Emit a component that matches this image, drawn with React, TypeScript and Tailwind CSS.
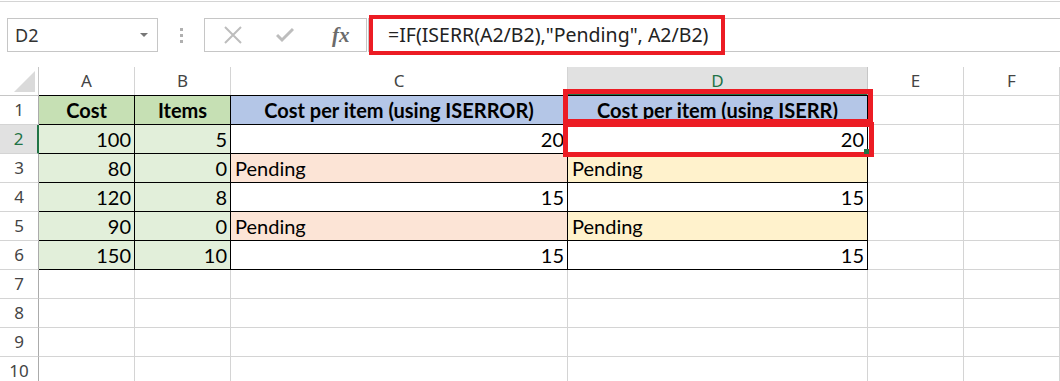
const cols = [
  { key: "A", w: "w-[96px]" },
  { key: "B", w: "w-[96px]" },
  { key: "C", w: "w-[337px]" },
  { key: "D", w: "w-[300px]" },
  { key: "E", w: "w-[96px]" },
  { key: "F", w: "w-[96px]" },
];

type Cell = { text?: string; align?: "left" | "right" | "center"; bg?: string; bold?: boolean };

const data: Cell[][] = [
  [
    { text: "Cost", align: "center", bg: "bg-[#c6e0b4]", bold: true },
    { text: "Items", align: "center", bg: "bg-[#c6e0b4]", bold: true },
    { text: "Cost per item (using ISERROR)", align: "center", bg: "bg-[#b4c6e7]", bold: true },
    { text: "Cost per item (using ISERR)", align: "center", bg: "bg-[#b4c6e7]", bold: true },
  ],
  [
    { text: "100", align: "right", bg: "bg-[#e2efda]" },
    { text: "5", align: "right", bg: "bg-[#e2efda]" },
    { text: "20", align: "right", bg: "bg-white" },
    { text: "20", align: "right", bg: "bg-white" },
  ],
  [
    { text: "80", align: "right", bg: "bg-[#e2efda]" },
    { text: "0", align: "right", bg: "bg-[#e2efda]" },
    { text: "Pending", align: "left", bg: "bg-[#fce4d6]" },
    { text: "Pending", align: "left", bg: "bg-[#fff2cc]" },
  ],
  [
    { text: "120", align: "right", bg: "bg-[#e2efda]" },
    { text: "8", align: "right", bg: "bg-[#e2efda]" },
    { text: "15", align: "right", bg: "bg-white" },
    { text: "15", align: "right", bg: "bg-white" },
  ],
  [
    { text: "90", align: "right", bg: "bg-[#e2efda]" },
    { text: "0", align: "right", bg: "bg-[#e2efda]" },
    { text: "Pending", align: "left", bg: "bg-[#fce4d6]" },
    { text: "Pending", align: "left", bg: "bg-[#fff2cc]" },
  ],
  [
    { text: "150", align: "right", bg: "bg-[#e2efda]" },
    { text: "10", align: "right", bg: "bg-[#e2efda]" },
    { text: "15", align: "right", bg: "bg-white" },
    { text: "15", align: "right", bg: "bg-white" },
  ],
];

const uiFont = "font-['Noto_Sans',sans-serif]";
const cellFont = "font-['Lato',sans-serif]";

export default function App() {
  const rows = Array.from({ length: 10 }, (_, i) => i + 1);

  return (
    <div className="relative w-[1060px] h-[381px] overflow-hidden bg-white">
      {/* Formula bar strip */}
      <div className="h-[66px] border-t border-[#d4d4d4] mt-[1px] flex items-center pt-[1px]">
        <div className={`ml-[7px] w-[151px] h-[34px] border border-[#c6c6c6] flex items-center justify-between pl-[7px] pr-[9px] text-[18px] text-[#333] ${uiFont}`}>
          <span>D2</span>
          <span className="w-0 h-0 border-l-[4px] border-r-[4px] border-t-[4px] border-l-transparent border-r-transparent border-t-[#777]" />
        </div>
        <div className="w-[46px] flex flex-col items-center gap-[3px]">
          <span className="w-[3px] h-[3px] bg-[#b0b0b0]" />
          <span className="w-[3px] h-[3px] bg-[#b0b0b0]" />
          <span className="w-[3px] h-[3px] bg-[#b0b0b0]" />
        </div>
        <div className="w-[163px] h-[34px] border border-[#c6c6c6] flex items-center">
          <svg width="20" height="20" viewBox="0 0 20 20" className="ml-[18px]">
            <path d="M2 2 L18 18 M18 2 L2 18" stroke="#bdbdbd" strokeWidth="2" fill="none" />
          </svg>
          <svg width="18" height="16" viewBox="0 0 18 16" className="ml-[33px]">
            <path d="M1 8 L6 13 L17 2" stroke="#bdbdbd" strokeWidth="3" fill="none" />
          </svg>
          <span className="ml-[38px] text-[21px] italic font-bold text-[#6b6b6b] font-['Liberation_Serif',serif] leading-none">
            fx
          </span>
        </div>
        <div className="ml-[1px] flex-1 h-[34px] border border-[#c6c6c6] border-r-0" />
      </div>

      {/* Grid */}
      <div className={`${uiFont} text-[#444]`}>
        <div className="flex h-[29px]">
          <div className="w-[39px] h-[29px] border-r border-b border-[#c6c6c6] flex items-end justify-end pr-[3px] pb-[3px]">
            <svg width="21" height="21" viewBox="0 0 21 21">
              <polygon points="21,0 21,21 0,21" fill="#dadada" />
            </svg>
          </div>
          {cols.map((c) => (
            <div
              key={c.key}
              className={`${c.w} h-[29px] border-r flex items-center justify-center text-[17px] ${
                c.key === "D"
                  ? "bg-[#e1e1e1] border-[#c6c6c6] border-b-2 border-b-[#217346] text-[#217346]"
                  : "border-b border-[#d4d4d4] text-[#444]"
              }`}
            >
              {c.key}
            </div>
          ))}
        </div>
        {rows.map((r) => {
          const rowData = data[r - 1];
          return (
            <div key={r} className="flex h-[29px]">
              <div
                className={`w-[39px] h-[29px] border-b border-[#d4d4d4] flex items-center justify-center text-[17px] ${
                  r === 2
                    ? "bg-[#e1e1e1] text-[#217346] border-r-2 border-r-[#217346]"
                    : "border-r border-r-[#ababab] text-[#444]"
                }`}
              >
                {r}
              </div>
              {cols.map((c, ci) => {
                const cell = rowData ? rowData[ci] : undefined;
                const inTable = !!rowData && ci < 4;
                const align =
                  cell?.align === "right"
                    ? "justify-end pr-[3px]"
                    : cell?.align === "left"
                    ? "justify-start pl-[4px]"
                    : "justify-center";
                return (
                  <div
                    key={c.key}
                    className={`${c.w} h-[29px] flex items-center text-[20px] text-black ${cellFont} ${align} ${
                      inTable
                        ? `${cell?.bg ?? ""} border-r border-b border-black ${r === 1 ? "border-t border-t-black h-[30px] -mt-[1px]" : ""}`
                        : "border-r border-b border-[#d4d4d4]"
                    } ${cell?.bold ? "font-bold" : ""}`}
                  >
                    {cell?.text}
                  </div>
                );
              })}
            </div>
          );
        })}
      </div>

      {/* Formula highlight */}
      <div className={`absolute left-[369px] top-[15px] w-[356px] h-[40px] border-[4px] border-[#ec1c24] flex items-center pl-[15px] text-[19.5px] text-[#222] ${uiFont}`}>
        =IF(ISERR(A2/B2),"Pending", A2/B2)
      </div>
      {/* Cell highlights */}
      <div className="absolute left-[563px] top-[89px] w-[310px] h-[35px] border-[5px] border-[#ec1c24]" />
      <div className="absolute left-[563px] top-[122px] w-[311px] h-[35px] border-[5px] border-[#ec1c24]" />
      <div className="absolute left-[864px] top-[149px] w-[5px] h-[5px] bg-[#217346]" />
    </div>
  );
}
